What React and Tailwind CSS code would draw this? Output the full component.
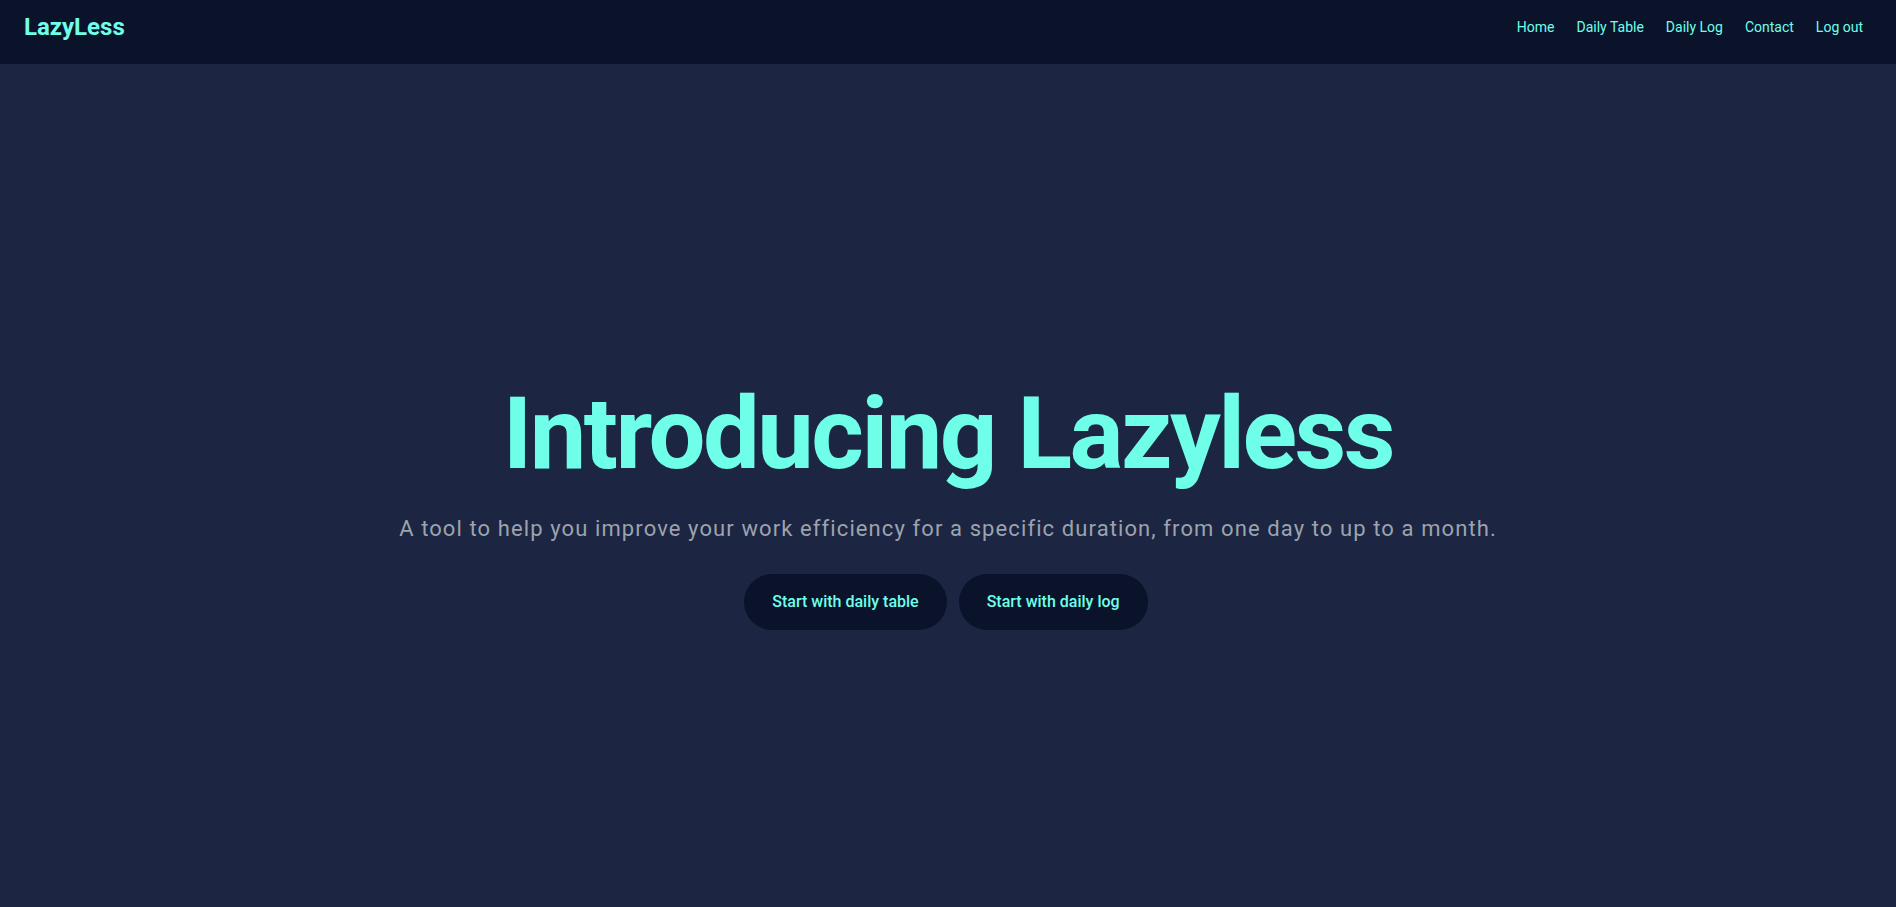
export default function App() {
  const links = ["Home", "Daily Table", "Daily Log", "Contact", "Log out"];

  return (
    <div className="min-h-screen flex flex-col bg-[#1c2541] font-['Roboto','Liberation_Sans',sans-serif]">
      {/* Navbar */}
      <nav className="h-16 shrink-0 bg-[#0b132b] flex items-center justify-between pl-6 pr-[22px] pb-2.5">
        <a href="#" className="text-2xl font-bold text-[#6fffe9]">LazyLess</a>
        <ul className="flex items-center">
          {links.map((l) => (
            <li key={l}>
              <a href="#" className="px-[11px] text-sm text-[#6fffe9]">{l}</a>
            </li>
          ))}
        </ul>
      </nav>

      {/* Hero */}
      <main className="flex-1 flex flex-col items-center justify-center text-center pt-[42px]">
        <h1 className="text-[101px] leading-none font-bold text-[#6fffe9] tracking-tight">
          Introducing Lazyless
        </h1>
        <p className="mt-[29px] text-[22px] leading-8 tracking-wider text-[#9ca3af]">
          A tool to help you improve your work efficiency for a specific duration, from one day to up to a month.
        </p>
        <div className="mt-[29px] flex gap-3 mr-1">
          <button className="px-7 py-4 rounded-full bg-[#0b132b] text-[#6fffe9] font-medium">
            Start with daily table
          </button>
          <button className="px-7 py-4 rounded-full bg-[#0b132b] text-[#6fffe9] font-medium">
            Start with daily log
          </button>
        </div>
      </main>
    </div>
  );
}
